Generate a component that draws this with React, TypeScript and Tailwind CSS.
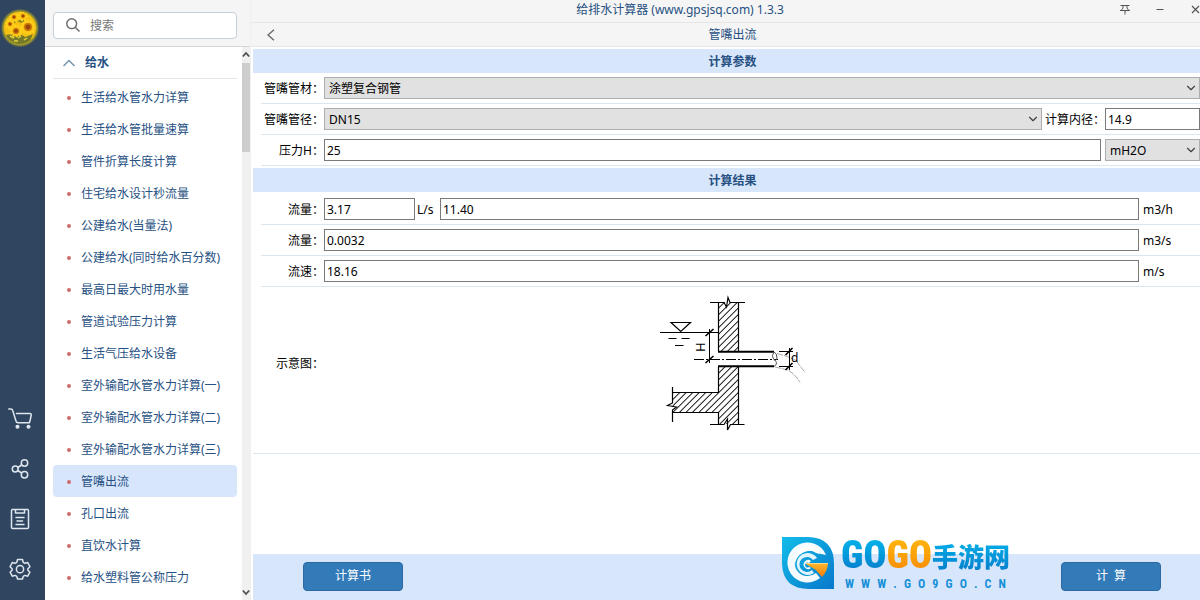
import { useState } from 'react';
import type { ReactNode } from 'react';
import { ChevronDown } from 'lucide-react';

const menuItems = [
  '生活给水管水力详算',
  '生活给水管批量速算',
  '管件折算长度计算',
  '住宅给水设计秒流量',
  '公建给水(当量法)',
  '公建给水(同时给水百分数)',
  '最高日最大时用水量',
  '管道试验压力计算',
  '生活气压给水设备',
  '室外输配水管水力详算(一)',
  '室外输配水管水力详算(二)',
  '室外输配水管水力详算(三)',
  '管嘴出流',
  '孔口出流',
  '直饮水计算',
  '给水塑料管公称压力',
];

function Avatar() {
  const flowers = [
    { x: 28, y: 27, r: 4 },
    { x: 16, y: 31, r: 3 },
    { x: 10, y: 24, r: 2 },
    { x: 14, y: 17, r: 2 },
    { x: 23, y: 16, r: 2 },
  ];
  return (
    <svg viewBox="0 0 40 56" className="h-14 w-10" aria-hidden="true">
      <defs>
        <radialGradient id="halo">
          <stop offset="0.75" stopColor="#d8bd16" />
          <stop offset="0.87" stopColor="#a09a28" stopOpacity="0.8" />
          <stop offset="1" stopColor="#2f4560" stopOpacity="0" />
        </radialGradient>
        <clipPath id="face">
          <circle cx="20" cy="28" r="16" />
        </clipPath>
      </defs>
      <circle cx="20" cy="28" r="20" fill="url(#halo)" />
      <g clipPath="url(#face)">
        <circle cx="20" cy="28" r="16" fill="#f6c112" />
        <path d="M9 22l4-2 3 2-3 2zM17 21l4-1 4-4 1 3-4 4zM6 35l6-1 4 2 6-1 3 2 8-3-3 7-7 4-9-1-6-3z" fill="#75792a" />
        <path d="M10 36l4 2M18 38l3-2M24 40l3-2M14 41l4 0" stroke="#e8d435" strokeWidth="1.5" />
        {flowers.map((f) => (
          <g key={f.x}>
            <circle cx={f.x} cy={f.y} r={f.r + 2} fill="#fdbd10" />
            <circle cx={f.x} cy={f.y} r={f.r + 2} fill="none" stroke="#ffd21e" strokeWidth="2.500" strokeDasharray="2 1" />
            <circle cx={f.x} cy={f.y} r={f.r} fill="#c97509" />
            <circle cx={f.x} cy={f.y} r={f.r * 0.6} fill="#97450c" />
          </g>
        ))}
      </g>
    </svg>
  );
}

function RailIcon({ label, children }: { label: string; children: ReactNode }) {
  return (
    <button type="button" aria-label={label} className="flex h-[50px] w-10 items-center justify-center">
      <svg viewBox="0 0 26 26" className="h-[26px] w-[26px]" fill="none" stroke="#dfe6ee" strokeWidth="1.500" strokeLinecap="round" strokeLinejoin="round">
        {children}
      </svg>
    </button>
  );
}

function Rail() {
  return (
    <nav className="flex w-[45px] shrink-0 flex-col justify-between bg-[#2f4560] pb-1.5">
      <Avatar />
      <div>
        <RailIcon label="商店">
          <path d="M1.800 3h2.200q1.300 0 1.700 1.500l3.300 10.500q.4 1.800 2 1.800h11.500M9.500 7.500h13.500q1.500 0 1.200 1.500l-1.200 6q-.4 1.800-1.800 1.800" />
          <circle cx="10.500" cy="20.800" r="1.300" fill="#dfe6ee" />
          <circle cx="21.500" cy="20.800" r="1.300" fill="#dfe6ee" />
        </RailIcon>
        <RailIcon label="分享">
          <circle cx="8.200" cy="13" r="2.900" />
          <circle cx="17.500" cy="7" r="3.200" />
          <circle cx="17.500" cy="18.800" r="3.200" />
          <path d="M10.800 11.500l3.800-2.500M10.800 14.500l3.800 2.500" />
        </RailIcon>
        <RailIcon label="记录">
          <path d="M5.500 3.500h15q1 0 1 1v17q0 1-1 1h-15q-1 0-1-1v-17q0-1 1-1zM8.500 3.500v3.500h9v-3.500M9 11.500h8M10 15h5.500M9 18.500h8" />
        </RailIcon>
        <RailIcon label="设置">
          <path d="M10.500 3.500h5l.7 2.800 1.700 1 2.800-.8 2.200 4.200-2 2v1.500l2 2-2.200 4-2.800-.8-1.700 1-.7 2.600h-5l-.7-2.600-1.700-1-2.800.8-2.200-4 2-2v-1.500l-2-2 2.200-4.200 2.800.8 1.700-1z" />
          <circle cx="13" cy="13.200" r="3.600" />
        </RailIcon>
      </div>
    </nav>
  );
}

function Sidebar({ active, onSelect }: { active: string; onSelect: (name: string) => void }) {
  return (
    <aside className="flex w-[205px] shrink-0 flex-col">
      <div className="flex h-[47px] items-center border-b border-[#d4d7da] bg-[#f5f5f5] pt-1 pr-[13px] pl-2">
        <label className="flex h-[27px] flex-1 items-center gap-2.5 rounded border border-[#c5ced9] bg-white pl-3">
          <svg viewBox="0 0 14 14" className="h-3.5 w-3.5 shrink-0" fill="none" stroke="#6e6e6e" strokeWidth="1.500">
            <circle cx="5.700" cy="5.700" r="4.900" />
            <path d="M9.200 9.200l4.300 4.300" />
          </svg>
          <input type="text" aria-label="搜索" placeholder="搜索" className="w-full min-w-0 bg-transparent pt-0.5 outline-none placeholder:text-[#777777]" />
        </label>
      </div>
      <div className="flex min-h-0 flex-1">
        <div className="min-w-0 flex-1 overflow-hidden pr-[5px] pl-2">
          <button type="button" className="flex h-8 w-full items-center gap-2.5 border-b border-[#e6e6e6] pl-2.5 font-bold text-[#275183]">
            <svg viewBox="0 0 12 8" className="h-2 w-3" fill="none" stroke="#7195b0" strokeWidth="1.500">
              <path d="M.5 7l5.500-5.500 5.500 5.500" />
            </svg>
            给水
          </button>
          <ul className="pt-0.5">
            {menuItems.map((name) => (
              <li key={name}>
                <a
                  href="#"
                  onClick={() => onSelect(name)}
                  className={
                    'flex h-8 items-center gap-2.5 rounded pt-0.5 pl-3.5 whitespace-nowrap text-[#275183] ' +
                    (name === active ? 'bg-[#d8e6fb]' : '')
                  }
                >
                  <span className="h-1 w-1 rounded-full bg-[#cd6c6c]" />
                  {name}
                </a>
              </li>
            ))}
          </ul>
        </div>
        <div className="flex w-2 shrink-0 flex-col items-center bg-[#f0f0f0]" aria-hidden="true">
          <svg viewBox="0 0 8 16" className="h-4 w-2" fill="none" stroke="#505050" strokeWidth="1.800">
            <path d="M.8 9.500l3.200-3.500 3.200 3.500" />
          </svg>
          <div className="h-[89px] w-2 bg-[#cdcdcd]" />
          <svg viewBox="0 0 8 16" className="mt-auto h-4 w-2" fill="none" stroke="#505050" strokeWidth="1.800">
            <path d="M.8 6.500l3.200 3.500 3.200-3.500" />
          </svg>
        </div>
      </div>
    </aside>
  );
}

function TitleBar() {
  return (
    <header className="flex h-[23px] items-center border-b border-[#e6e6e6] bg-[#f5f5f5] pb-0.5">
      <h1 className="flex-1 text-center text-[#275183]">给排水计算器 (www.gpsjsq.com) 1.3.3</h1>
      <div className="flex w-[91px] justify-between pl-[11px]">
        <button type="button" aria-label="置顶">
          <svg viewBox="0 0 10 10" className="h-2.5 w-2.5" fill="none" stroke="#555555">
            <path d="M.5 .5h9M3 .5v2.500l-1.500 2M7 .5v2.500l1.500 2M0 5.500h10M5 5.500v4" />
          </svg>
        </button>
        <button type="button" aria-label="最小化">
          <svg viewBox="0 0 10 10" className="h-2.5 w-2.5" fill="none" stroke="#555555">
            <path d="M1.500 4.500h7" />
          </svg>
        </button>
        <button type="button" aria-label="关闭">
          <svg viewBox="0 0 10 10" className="h-2.5 w-2.5" fill="none" stroke="#555555" strokeWidth="1.200">
            <path d="M2 1l7 7M9 1l-7 7" />
          </svg>
        </button>
      </div>
    </header>
  );
}

function SectionTitle({ children }: { children: ReactNode }) {
  return (
    <h3 className="flex h-6 items-center justify-center bg-[#d8e6fb] pt-0.5 pl-3 font-bold text-[#275183]">{children}</h3>
  );
}

function Row({ label, htmlFor, children }: { label: string; htmlFor: string; children: ReactNode }) {
  return (
    <div className="ml-2 flex items-center border-b border-[#dce6ee] py-1">
      <label htmlFor={htmlFor} className="w-[63px] shrink-0 pt-0.5 text-right whitespace-nowrap">
        {label}
      </label>
      {children}
    </div>
  );
}

function Unit({ children, className }: { children: ReactNode; className: string }) {
  return <span className={'shrink-0 pt-0.5 ' + className}>{children}</span>;
}

function TextBox({ id, value, className, label }: { id: string; value: string; className: string; label?: string }) {
  return (
    <input
      id={id}
      type="text"
      aria-label={label}
      defaultValue={value}
      className={'h-[22px] min-w-0 border border-[#7a7a7a] bg-white px-0.5 outline-none ' + className}
    />
  );
}

function Picker({ id, options, className, label }: { id: string; options: string[]; className: string; label?: string }) {
  return (
    <div className={'relative ' + className}>
      <select
        id={id}
        aria-label={label}
        className="block h-[22px] w-full appearance-none border border-[#adadad] bg-[#e1e1e1] pt-0.5 pl-1 outline-none"
      >
        {options.map((o) => (
          <option key={o}>{o}</option>
        ))}
      </select>
      <ChevronDown size={14} strokeWidth={2} className="pointer-events-none absolute top-1 right-0.5 text-[#404040]" />
    </div>
  );
}

function Diagram() {
  return (
    <svg viewBox="0 0 170 155" className="h-[155px] w-[170px]" role="img" aria-label="示意图" fill="none" stroke="#000000">
      <defs>
        <pattern id="hatch" width="4.600" height="4.600" patternUnits="userSpaceOnUse" patternTransform="rotate(45)">
          <path d="M.5 0v4.600" stroke="#000000" strokeWidth="0.900" />
        </pattern>
      </defs>
      <path d="M68.500 17h20v49h-20z" fill="url(#hatch)" stroke="none" />
      <path d="M68.500 82h20v57h-20v-12h-46v-20h46z" fill="url(#hatch)" stroke="none" />
      <path d="M68.500 17v49M88.500 17v49M88.500 82v57M68.500 82v25.500h-46M68.500 139v-11.500h-46" strokeWidth="1.200" />
      <path d="M60 17.500h14l2.500 4.500 1.500-9.500 2 5h15M60 139.500h14l3.500-5.500v11l3-5.500h14M22.500 102v16l-5 2.500 9 1.500-4 3v12" strokeWidth="1.200" />
      <path d="M68 66.800h56M68 81.200h56" strokeWidth="2" />
      <path d="M10 47.500h58M21 37.500h19.500l-9.700 9zM18.500 53.500h8M31.500 53.500h8M25 60.500h8.500" strokeWidth="1.200" />
      <path d="M59.500 44v34" />
      <path d="M55.500 51l8-7M55.500 78l8-7" strokeWidth="1.600" />
      <path d="M44 74.500h84" strokeDasharray="10 2 2 2" />
      <path d="M124 67q-3 4-.5 7t3.500-1q0-5-3-6M124 74.500q5 4 0 7" stroke="#555555" />
      <path d="M127 68.500q12 3 19 7l9 12M125 82l13 3q8 5 12 12.500" stroke="#aaaaaa" strokeDasharray="6 1" />
      <path d="M129 66.500h14M129 81.500h14M139.500 63v22" />
      <path d="M135.500 70l7-7M135.500 85l7-7" strokeWidth="1.600" />
      <text x="0" y="0" transform="translate(55 67) rotate(-90)" className="text-[13px]" fill="#000000" stroke="none">H</text>
      <text x="141" y="77" className="text-[12px]" fill="#000000" stroke="none">d</text>
    </svg>
  );
}

function Brand() {
  return (
    <div className="pointer-events-none absolute right-[190px] bottom-2.5 flex w-[228px] items-end gap-1.5">
      <svg viewBox="0 0 53 53" className="h-[53px] w-[53px] shrink-0" aria-hidden="true">
        <defs>
          <linearGradient id="tile" x1="0" y1="0" x2="1" y2="1">
            <stop offset="0" stopColor="#12bde9" />
            <stop offset="1" stopColor="#0878cb" />
          </linearGradient>
          <linearGradient id="wedge" x1="0" y1="0" x2="0" y2="1">
            <stop offset="0" stopColor="#ffb52c" />
            <stop offset="1" stopColor="#f47b09" />
          </linearGradient>
        </defs>
        <path d="M0 0h27q25 1 25 27v25H27Q1 52 0 27z" fill="url(#tile)" />
        <path d="M44 18A20 20 0 1 0 38 41L34 36A13 13 0 1 1 34 16z" fill="#f4fbff" />
        <path d="M37 17A15 15 0 0 0 13 29Q10 18 18 12q9-6 19-1z" fill="#ffffff" />
        <path d="M35 21a11 11 0 1 0-3 15l-2-3a7.500 7.500 0 1 1 1-10z" fill="#dff4ff" />
        <path d="M29 24a4.500 4.500 0 1 0 0 7l-2-1a2.500 2.500 0 1 1 0-4z" fill="#ffffff" />
        <path d="M24 27h22q-1 8-6 13l-6-7z" fill="url(#wedge)" />
        <path d="M24 26.500h22" stroke="#ffd98a" />
      </svg>
      <div className="flex flex-1 flex-col">
        <div className="flex items-center justify-between whitespace-nowrap">
          <span className="bg-linear-to-b from-[#05bdf0] to-[#0873c5] bg-clip-text font-['Roboto_Condensed','Noto_Sans_CJK_SC',sans-serif] text-[38px] leading-[45px] font-black text-transparent">
            GO
          </span>
          <span className="bg-linear-to-b from-[#ffbd13] to-[#f58300] bg-clip-text font-['Roboto_Condensed','Noto_Sans_CJK_SC',sans-serif] text-[38px] leading-[45px] font-black text-transparent">
            GO
          </span>
          <span className="bg-linear-to-b from-[#05bdf0] to-[#0873c5] bg-clip-text font-['Noto_Sans_CJK_SC',sans-serif] text-[26px] leading-[45px] font-black text-transparent">
            手游网
          </span>
        </div>
        <div className="flex justify-between px-1 font-['Roboto_Condensed','Liberation_Sans',sans-serif] text-xs leading-3 font-bold text-[#1590d8]">
          {Array.from('WWW.GO9GO.CN').map((c, i) => (
            <span key={i}>{c}</span>
          ))}
        </div>
      </div>
    </div>
  );
}

export default function App() {
  const [active, setActive] = useState('管嘴出流');
  return (
    <div className="flex h-screen overflow-hidden bg-white font-['Noto_Sans','Noto_Sans_CJK_SC',sans-serif] text-xs text-black">
      <Rail />
      <Sidebar active={active} onSelect={setActive} />
      <main className="relative flex min-w-0 flex-1 flex-col border-l border-[#f0f0f0]">
        <TitleBar />
        <div className="flex h-6 items-center border-b border-[#e6e6e6] bg-[#f5f5f5] pl-4">
          <button type="button" aria-label="返回">
            <svg viewBox="0 0 8 12" className="h-3 w-2" fill="none" stroke="#666666" strokeWidth="1.300">
              <path d="M7 .8l-6 5.200 6 5.200" />
            </svg>
          </button>
          <h2 className="flex-1 pr-2.5 text-center text-[#275183]">{active}</h2>
        </div>
        <form className="flex min-h-0 flex-1 flex-col pt-0.5 pl-0.5" onSubmit={(e) => e.preventDefault()}>
          <SectionTitle>计算参数</SectionTitle>
          <Row label="管嘴管材：" htmlFor="material">
            <Picker id="material" options={['涂塑复合钢管']} className="flex-1" />
          </Row>
          <Row label="管嘴管径：" htmlFor="diameter">
            <Picker id="diameter" options={['DN15']} className="flex-1" />
            <label htmlFor="inner" className="w-[63px] shrink-0 pt-0.5 pl-[3px] whitespace-nowrap">
              计算内径：
            </label>
            <TextBox id="inner" value="14.9" className="w-[95px]" />
          </Row>
          <Row label="压力H：" htmlFor="pressure">
            <TextBox id="pressure" value="25" className="flex-1" />
            <Picker id="unit" label="压力单位" options={['mH2O']} className="ml-1 w-[95px]" />
          </Row>
          <div className="pt-0.5 pb-0.5">
            <SectionTitle>计算结果</SectionTitle>
          </div>
          <Row label="流量：" htmlFor="flowSecond">
            <TextBox id="flowSecond" value="3.17" className="w-[91px]" />
            <Unit className="w-[25px] pl-0.5">L/s</Unit>
            <TextBox id="flowHour" label="每小时流量" value="11.40" className="flex-1" />
            <Unit className="w-[61px] pl-1">m3/h</Unit>
          </Row>
          <Row label="流量：" htmlFor="flowCubic">
            <TextBox id="flowCubic" value="0.0032" className="flex-1" />
            <Unit className="w-[61px] pl-1">m3/s</Unit>
          </Row>
          <Row label="流速：" htmlFor="speed">
            <TextBox id="speed" value="18.16" className="flex-1" />
            <Unit className="w-[61px] pl-1">m/s</Unit>
          </Row>
          <div className="flex h-[167px] shrink-0 items-center border-b border-[#dce6ee] pb-4">
            <span className="w-[71px] shrink-0 pt-1 text-right">示意图：</span>
            <div className="flex flex-1 justify-center pr-[54px]">
              <Diagram />
            </div>
          </div>
          <div className="mt-auto flex h-[46px] shrink-0 items-center justify-between bg-[#d8e6fb] pr-[39px] pb-0.5 pl-[50px]">
            <button type="button" className="h-[29px] w-[100px] rounded border border-[#2c69a3] bg-[#327ab8] text-white">
              计算书
            </button>
            <button type="submit" className="h-[29px] w-[100px] rounded border border-[#2c69a3] bg-[#327ab8] whitespace-pre text-white">
              {'计  算'}
            </button>
          </div>
        </form>
        <Brand />
      </main>
    </div>
  );
}
